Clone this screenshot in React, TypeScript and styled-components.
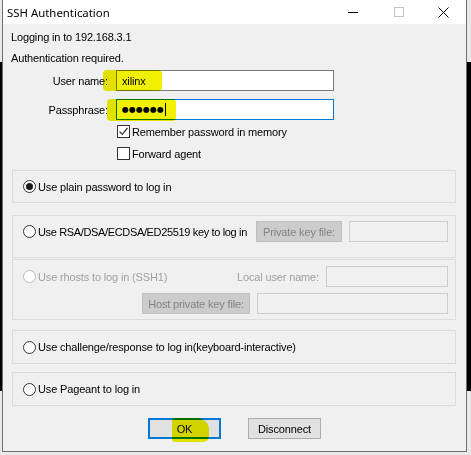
import styled, { createGlobalStyle } from 'styled-components';

const GlobalStyle = createGlobalStyle`
  html, body {
    margin: 0;
    padding: 0;
  }
  body {
    background: #e9e9e9;
    font-family: 'Liberation Sans', Arial, sans-serif;
    font-size: 11px;
    letter-spacing: -0.15px;
    color: #000;
  }
`;

const Desktop = styled.div`
  position: relative;
  width: 471px;
  height: 455px;
  overflow: hidden;
  background: #e9e9e9;
`;

const Backdrop = styled.div`
  position: absolute;
  left: 0;
  right: 0;
  top: 62px;
  height: 329px;
  background: #000;
`;

const Window = styled.div`
  position: absolute;
  left: 2px;
  top: 0;
  width: 463px;
  height: 451px;
  border: 1px solid #6f6f6f;
  border-top: none;
  background: #f0f0f0;
  display: flex;
  flex-direction: column;
  white-space: nowrap;
`;

const TitleBar = styled.div`
  height: 24px;
  flex: none;
  background: #fff;
  display: flex;
  align-items: center;
`;

const Title = styled.div`
  flex: 1;
  padding-left: 4px;
  font-family: 'Noto Sans', 'Open Sans', sans-serif;
  font-size: 11.4px;
  letter-spacing: 0;
  color: #000;
`;

const CaptionButton = styled.div`
  width: 45px;
  height: 24px;
  display: flex;
  align-items: center;
  justify-content: center;
`;

const Body = styled.div`
  padding: 0 10px 0 8px;
  display: flex;
  flex-direction: column;
`;

const InfoLine = styled.div<{ $top: number }>`
  margin-top: ${(p) => p.$top}px;
  line-height: 13px;
`;

const FormGrid = styled.div`
  margin-top: 5px;
  display: grid;
  grid-template-columns: 97px 218px;
  column-gap: 8px;
  row-gap: 8px;
  align-items: center;
`;

const FieldLabel = styled.div`
  text-align: right;
`;

const TextBox = styled.div<{ $focused?: boolean; $disabled?: boolean; $width?: number }>`
  box-sizing: border-box;
  flex: none;
  height: 21px;
  width: ${(p) => (p.$width ? `${p.$width}px` : 'auto')};
  border: 1px solid ${(p) => (p.$focused ? '#0078d7' : p.$disabled ? '#cccccc' : '#7a7a7a')};
  background: ${(p) => (p.$disabled ? '#f0f0f0' : '#fff')};
  display: flex;
  align-items: center;
  padding-left: 5px;
`;

const Dots = styled.span`
  font-family: 'DejaVu Sans', sans-serif;
  font-size: 8px;
  letter-spacing: 0;
`;

const Caret = styled.span`
  width: 1px;
  height: 13px;
  background: #000;
  margin-left: 1px;
`;

const CheckRow = styled.label<{ $top: number }>`
  margin-top: ${(p) => p.$top}px;
  margin-left: 106px;
  display: flex;
  align-items: center;
  gap: 2px;
  height: 13px;
`;

const CheckBox = styled.span`
  box-sizing: border-box;
  width: 13px;
  height: 13px;
  border: 1px solid #333;
  background: #fff;
  display: flex;
  align-items: center;
  justify-content: center;
`;

const Group = styled.div<{ $top: number; $height: number; $padTop?: number }>`
  box-sizing: border-box;
  margin-top: ${(p) => p.$top}px;
  margin-left: 1px;
  width: 444px;
  height: ${(p) => p.$height}px;
  border: 1px solid #dcdcdc;
  padding: ${(p) => p.$padTop ?? 0}px 7px 0 10px;
  display: flex;
  flex-direction: column;
  justify-content: ${(p) => (p.$padTop === undefined ? 'center' : 'flex-start')};
  gap: 6px;
`;

const GroupRow = styled.div<{ $end?: boolean }>`
  display: flex;
  align-items: center;
  justify-content: ${(p) => (p.$end ? 'flex-end' : 'space-between')};
  gap: 7px;
  min-height: 21px;
`;

const RadioLabel = styled.label<{ $disabled?: boolean; $tight?: boolean }>`
  display: flex;
  align-items: center;
  gap: 2px;
  flex: none;
  letter-spacing: ${(p) => (p.$tight ? '-0.35px' : '-0.15px')};
  color: ${(p) => (p.$disabled ? '#a0a0a0' : '#000')};
`;

const RadioCircle = styled.span<{ $disabled?: boolean }>`
  box-sizing: border-box;
  width: 13px;
  height: 13px;
  border-radius: 50%;
  border: 1px solid ${(p) => (p.$disabled ? '#bcbcbc' : '#333')};
  background: #fff;
  display: flex;
  align-items: center;
  justify-content: center;
`;

const RadioDot = styled.span`
  width: 7px;
  height: 7px;
  border-radius: 50%;
  background: #1a1a1a;
`;

const Cluster = styled.div`
  display: flex;
  align-items: center;
  gap: 7px;
  flex: none;
`;

const DisabledButton = styled.div<{ $width: number }>`
  box-sizing: border-box;
  flex: none;
  width: ${(p) => p.$width}px;
  height: 21px;
  border: 1px solid #bfbfbf;
  background: #cccccc;
  color: #838383;
  display: flex;
  align-items: center;
  justify-content: center;
`;

const DisabledText = styled.span`
  color: #a0a0a0;
`;

const ButtonRow = styled.div`
  margin-top: 12px;
  display: flex;
  justify-content: center;
  gap: 27px;
  padding-left: 2px;
`;

const PushButton = styled.div<{ $default?: boolean }>`
  box-sizing: border-box;
  width: 73px;
  height: 21px;
  border: ${(p) => (p.$default ? '2px solid #0078d7' : '1px solid #adadad')};
  background: #e1e1e1;
  display: flex;
  align-items: center;
  justify-content: center;
`;

const Marker = styled.div`
  position: absolute;
  background: #f0f000;
  mix-blend-mode: multiply;
  border-radius: 4px;
`;

const CheckMark = () => (
  <svg width="11" height="11" viewBox="0 0 11 11">
    <path d="M1.5 5.5 L4.2 8.3 L9.5 2" fill="none" stroke="#333" strokeWidth="1.2" />
  </svg>
);

const App = () => {
  return (
    <>
      <GlobalStyle />
      <Desktop>
        <Backdrop />
        <Window>
          <TitleBar>
            <Title>SSH Authentication</Title>
            <CaptionButton>
              <svg width="11" height="11" viewBox="0 0 11 11">
                <line x1="0" y1="5.5" x2="10" y2="5.5" stroke="#000" strokeWidth="1" />
              </svg>
            </CaptionButton>
            <CaptionButton>
              <svg width="10" height="10" viewBox="0 0 10 10">
                <rect x="0.5" y="0.5" width="9" height="9" fill="none" stroke="#c4c4c4" strokeWidth="1" />
              </svg>
            </CaptionButton>
            <CaptionButton>
              <svg width="11" height="11" viewBox="0 0 11 11">
                <path d="M0.5 0.5 L10.5 10.5 M10.5 0.5 L0.5 10.5" stroke="#000" strokeWidth="1" />
              </svg>
            </CaptionButton>
          </TitleBar>

          <Body>
            <InfoLine $top={7}>Logging in to 192.168.3.1</InfoLine>
            <InfoLine $top={8}>Authentication required.</InfoLine>

            <FormGrid>
              <FieldLabel>User name:</FieldLabel>
              <TextBox>xilinx</TextBox>
              <FieldLabel>Passphrase:</FieldLabel>
              <TextBox $focused>
                <Dots>●●●●●●</Dots>
                <Caret />
              </TextBox>
            </FormGrid>

            <CheckRow $top={5}>
              <CheckBox>
                <CheckMark />
              </CheckBox>
              Remember password in memory
            </CheckRow>
            <CheckRow $top={9}>
              <CheckBox />
              Forward agent
            </CheckRow>

            <Group $top={10} $height={33}>
              <GroupRow>
                <RadioLabel>
                  <RadioCircle>
                    <RadioDot />
                  </RadioCircle>
                  Use plain password to log in
                </RadioLabel>
              </GroupRow>
            </Group>

            <Group $top={12} $height={43} $padTop={5}>
              <GroupRow>
                <RadioLabel $tight>
                  <RadioCircle />
                  Use RSA/DSA/ECDSA/ED25519 key to log in
                </RadioLabel>
                <Cluster>
                  <DisabledButton $width={86}>Private key file:</DisabledButton>
                  <TextBox $disabled $width={99} />
                </Cluster>
              </GroupRow>
            </Group>

            <Group $top={1} $height={61} $padTop={6}>
              <GroupRow>
                <RadioLabel $disabled>
                  <RadioCircle $disabled />
                  Use rhosts to log in (SSH1)
                </RadioLabel>
                <Cluster>
                  <DisabledText>Local user name:</DisabledText>
                  <TextBox $disabled $width={122} />
                </Cluster>
              </GroupRow>
              <GroupRow $end>
                <DisabledButton $width={108}>Host private key file:</DisabledButton>
                <TextBox $disabled $width={191} />
              </GroupRow>
            </Group>

            <Group $top={10} $height={34}>
              <GroupRow>
                <RadioLabel>
                  <RadioCircle />
                  Use challenge/response to log in(keyboard-interactive)
                </RadioLabel>
              </GroupRow>
            </Group>

            <Group $top={8} $height={34}>
              <GroupRow>
                <RadioLabel>
                  <RadioCircle />
                  Use Pageant to log in
                </RadioLabel>
              </GroupRow>
            </Group>

            <ButtonRow>
              <PushButton $default>OK</PushButton>
              <PushButton>Disconnect</PushButton>
            </ButtonRow>
          </Body>

          <Marker style={{ left: 100, top: 70, width: 59, height: 21 }} />
          <Marker style={{ left: 104, top: 99, width: 69, height: 22 }} />
          <Marker style={{ left: 169, top: 418, width: 37, height: 24, borderRadius: '3px 12px 6px 3px' }} />
        </Window>
      </Desktop>
    </>
  );
};

export default App;
